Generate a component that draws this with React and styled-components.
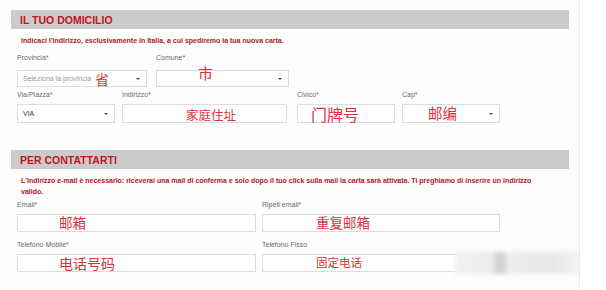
import styled, { createGlobalStyle } from "styled-components";

const Global = createGlobalStyle`
  body {
    margin: 0;
    background: #ffffff;
    font-family: "Liberation Sans", Arial, sans-serif;
  }
`;

const Page = styled.div`
  position: relative;
  width: 580px;
  height: 290px;
  box-sizing: border-box;
  padding: 10px 0 0 11px;
  background: #fdfdfd;
  border-right: 1px solid #ececec;
  overflow: hidden;
`;

const Section = styled.section`
  width: 558px;
  margin-top: ${(p) => p.$top || 0}px;
`;

const Bar = styled.div`
  height: 19px;
  background: #cbcbcb;
  display: flex;
  align-items: center;
  padding-left: 9px;
  color: #c0141c;
  font-weight: bold;
  font-size: 10.5px;
  transform-origin: left center;
`;

const Notice = styled.p`
  margin: 6px 0 0 10px;
  width: 530px;
  color: #b0181c;
  font-weight: bold;
  font-size: 7px;
  line-height: 11px;
`;

const Row = styled.div`
  display: flex;
  margin: ${(p) => p.$top || 0}px 0 0 6px;
  gap: ${(p) => p.$gap || 8}px;
`;

const Field = styled.div`
  display: flex;
  flex-direction: column;
  width: ${(p) => p.$w}px;
  margin-left: ${(p) => p.$ml || 0}px;
`;

const Label = styled.span`
  font-size: 7px;
  line-height: 10px;
  color: #6a6a6a;
`;

const Box = styled.div`
  position: relative;
  margin-top: ${(p) => p.$gap || 4}px;
  height: ${(p) => p.$h || 18}px;
  box-sizing: border-box;
  border: 1px solid #dcdcdc;
  background: #fff;
  display: flex;
  align-items: center;
  padding-left: 5px;
  font-size: 7px;
  color: ${(p) => (p.$muted ? "#9a9a9a" : "#333")};
`;

const Caret = styled.span`
  position: absolute;
  right: 6px;
  top: 50%;
  margin-top: -1px;
  border-left: 2px solid transparent;
  border-right: 2px solid transparent;
  border-top: 2px solid #444;
`;

const Note = styled.span`
  font-family: "Noto Sans CJK SC", sans-serif;
  color: #d8323a;
  font-size: ${(p) => p.$size || 13.5}px;
  line-height: 1;
  margin-left: ${(p) => p.$at || 0}px;
  transform: translateY(${(p) => p.$y || 0}px);
  white-space: nowrap;
`;

const Smudge = styled.div`
  position: absolute;
  left: 455px;
  top: 252px;
  width: 125px;
  height: 22px;
  background: linear-gradient(90deg, #f1f1f1 0%, #ececec 30%, #d3d3d3 33%, #d3d3d3 40%, #ededed 42%, #e8e8e8 80%, #f4f4f4 100%);
  filter: blur(2px);
`;

export default function App() {
  return (
    <>
      <Global />
      <Page>
        <Section>
          <Bar>IL TUO DOMICILIO</Bar>
          <Notice>
            Indicaci l'indirizzo, esclusivamente in Italia, a cui spediremo la tua nuova carta.
          </Notice>
          <Row $top={7} $gap={9}>
            <Field $w={130}>
              <Label>Provincia*</Label>
              <Box $gap={7} $h={17} $muted>
                Seleziona la provincia
                <Note $at={4} $size={14}>省</Note>
                <Caret />
              </Box>
            </Field>
            <Field $w={133}>
              <Label>Comune*</Label>
              <Box $gap={7} $h={17}>
                <Note $at={36} $size={15} $y={-6}>市</Note>
                <Caret />
              </Box>
            </Field>
          </Row>
          <Row $top={3} $gap={7}>
            <Field $w={98}>
              <Label>Via/Piazza*</Label>
              <Box $h={19}>
                VIA
                <Caret />
              </Box>
            </Field>
            <Field $w={165}>
              <Label>Indirizzo*</Label>
              <Box $h={19}>
                <Note $at={58} $size={12.5} $y={2}>家庭住址</Note>
              </Box>
            </Field>
            <Field $w={98} $ml={3}>
              <Label>Civico*</Label>
              <Box $h={19}>
                <Note $at={8} $size={16}>门牌号</Note>
              </Box>
            </Field>
            <Field $w={98}>
              <Label>Cap*</Label>
              <Box $h={19}>
                <Note $at={20} $size={14.5}>邮编</Note>
                <Caret />
              </Box>
            </Field>
          </Row>
        </Section>
        <Section $top={27}>
          <Bar>PER CONTATTARTI</Bar>
          <Notice>
            L'indirizzo e-mail è necessario: riceverai una mail di conferma e solo dopo il tuo click sulla mail la carta sarà attivata. Ti preghiamo di inserire un indirizzo valido.
          </Notice>
          <Row $top={3} $gap={6}>
            <Field $w={239}>
              <Label>Email*</Label>
              <Box>
                <Note $at={36}>邮箱</Note>
              </Box>
            </Field>
            <Field $w={238}>
              <Label>Ripeti email*</Label>
              <Box>
                <Note $at={48}>重复邮箱</Note>
              </Box>
            </Field>
          </Row>
          <Row $top={8} $gap={6}>
            <Field $w={239}>
              <Label>Telefono Mobile*</Label>
              <Box>
                <Note $at={36} $size={14}>电话号码</Note>
              </Box>
            </Field>
            <Field $w={238}>
              <Label>Telefono Fisso</Label>
              <Box>
                <Note $at={48} $size={11.5}>固定电话</Note>
              </Box>
            </Field>
          </Row>
        </Section>
        <Smudge />
      </Page>
    </>
  );
}
